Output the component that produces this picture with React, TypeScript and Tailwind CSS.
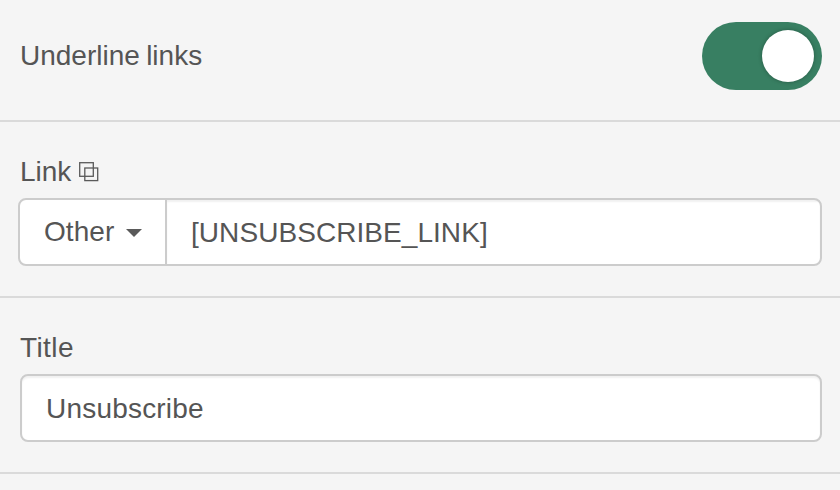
import React, { useState } from 'react';

interface FieldLabelProps {
  htmlFor: string;
  children: React.ReactNode;
}

const FieldLabel: React.FC<FieldLabelProps> = ({ htmlFor, children }) => (
  <label htmlFor={htmlFor} className="flex h-10 items-center gap-2 leading-10">
    {children}
  </label>
);

const DuplicateIcon = () => (
  <svg className="-mt-px h-5 w-5 shrink-0" viewBox="0 0 20 20" fill="none" stroke="#5a5a5a" strokeWidth="1.3">
    <rect x="0.7" y="0.7" width="13.6" height="13.6" />
    <rect x="5.8" y="6" width="12.9" height="12.6" />
  </svg>
);

export default function App() {
  const [underline, setUnderline] = useState(true);
  const [link, setLink] = useState('[UNSUBSCRIBE_LINK]');
  const [title, setTitle] = useState('Unsubscribe');

  return (
    <div className="h-[490px] w-[840px] overflow-hidden bg-[#f5f5f5] font-['Liberation_Sans',Arial,sans-serif] text-[28px] text-[#555]">
      {/* Underline toggle */}
      <div className="flex h-[122px] items-start justify-between border-b-2 border-[#dadada] pt-[22px] pr-[18px] pl-5">
        <span className="leading-[68px] [word-spacing:-1.5px]">Underline links</span>
        <button
          role="switch"
          aria-checked={underline}
          onClick={() => setUnderline(!underline)}
          className={`flex h-[68px] w-[120px] items-center rounded-full px-2 ${underline ? 'justify-end bg-[#387f62]' : 'justify-start bg-[#bbb]'}`}
        >
          <span className="h-[52px] w-[52px] rounded-full bg-white shadow-[0_0_4px_rgba(0,0,0,0.3)]" />
        </button>
      </div>

      {/* Link */}
      <div className="h-44 border-b-2 border-[#dadada] pt-[30px] pr-[18px] pl-[18px]">
        <div className="pl-0.5">
          <FieldLabel htmlFor="link">
            Link
            <DuplicateIcon />
          </FieldLabel>
        </div>
        <div className="mt-1.5 flex h-[68px] overflow-hidden rounded-lg border-2 border-[#ccc] bg-white">
          <button className="flex w-[147px] shrink-0 items-center gap-3 border-r-2 border-[#ccc] pl-6 leading-[64px] tracking-[0.05px]">
            Other
            <svg className="mt-0.5 h-2 w-4" viewBox="0 0 16 8" fill="#5a5a5a">
              <path d="M0 0h16L8 8z" />
            </svg>
          </button>
          <input
            id="link"
            value={link}
            onChange={(e) => setLink(e.target.value)}
            className="min-w-0 flex-1 pt-0.5 pl-6 tracking-[0.06px] shadow-[inset_0_2px_2px_rgba(0,0,0,0.06)] outline-none"
          />
        </div>
      </div>

      {/* Title */}
      <div className="h-44 border-b-2 border-[#dadada] pt-[30px] pr-[18px] pl-5">
        <FieldLabel htmlFor="title">
          <span className="tracking-[0.4px]">Title</span>
        </FieldLabel>
        <input
          id="title"
          value={title}
          onChange={(e) => setTitle(e.target.value)}
          className="mt-1.5 block h-[68px] w-full rounded-lg border-2 border-[#ccc] bg-white pt-0.5 pl-6 tracking-[0.2px] shadow-[inset_0_2px_2px_rgba(0,0,0,0.06)] outline-none"
        />
      </div>
    </div>
  );
}
